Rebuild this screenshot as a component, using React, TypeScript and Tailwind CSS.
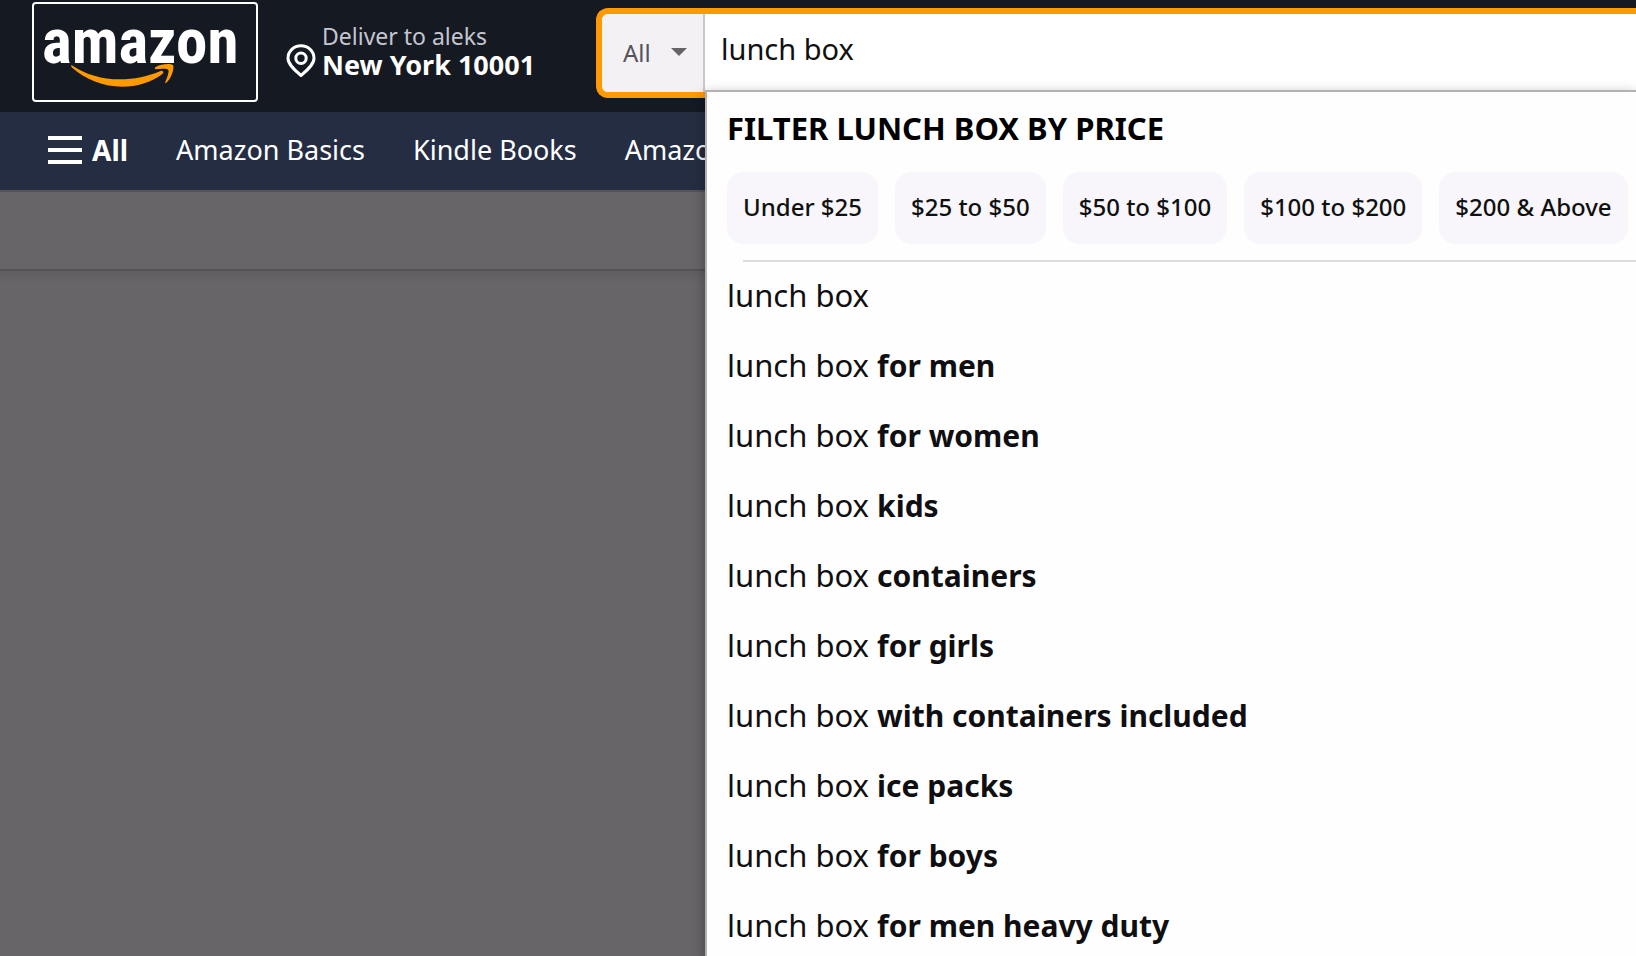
import React from 'react';

const priceFilters = ['Under $25', '$25 to $50', '$50 to $100', '$100 to $200', '$200 & Above'];

const suggestions = [
  '',
  'for men',
  'for women',
  'kids',
  'containers',
  'for girls',
  'with containers included',
  'ice packs',
  'for boys',
  'for men heavy duty',
];

const Logo: React.FC = () => (
  <a
    href="#"
    aria-label="amazon"
    className="relative h-[100px] w-[226px] shrink-0 rounded border-2 border-white text-white"
  >
    <span className="block pl-2 pt-1 font-['Liberation_Sans_Narrow','Roboto_Condensed','Liberation_Sans',sans-serif] text-[63px] leading-[68px] font-bold">
      amazon
    </span>
    {/* Smile with arrow head */}
    <svg viewBox="0 0 104 24" className="absolute left-[37px] top-[60px] h-6 w-[104px]" fill="#ff9900">
      <path d="M1.2 1.4C15 10.5 31 15.300 49 15.300c14 0 28-3 40.500-8.400 2.200-.9 4 1.400 1.900 3C80.500 18.300 65.500 22.700 51.500 22.700 32.500 22.700 14 15.500.9 3.500-.3 2.300-.2.7 1.200 1.400Z" />
      <path d="M84.300 3.300C89 .2 96.500-.4 100.700.4c1.500.3 1.800.9 1.700 2.900-.2 5.500-2.900 11.700-6.800 15.300-.8.700-1.700.3-1.300-.6 1.400-3.500 4.300-10.500 2.900-12.300-1.400-1.700-8.700-.9-12.100-.5-1.200.1-1.700-1.300-.8-1.900Z" />
    </svg>
  </a>
);

const DeliverTo: React.FC = () => (
  <a href="#" className="flex w-[338px] shrink-0 items-start pl-7 pt-5 text-white">
    <svg viewBox="0 0 30 34" className="mt-[22px] h-[34px] w-[30px] shrink-0" fill="none" stroke="currentColor" strokeWidth="3">
      <path d="M15 31.500C9 26.500 2 20.500 2 14.300 2 7.200 7.800 1.800 15 1.800s13 5.400 13 12.500c0 6.200-7 12.200-13 17.200Z" strokeLinejoin="round" />
      <circle cx="15" cy="14.300" r="5.200" />
    </svg>
    <span className="pl-1.5 whitespace-nowrap">
      <span className="block text-[23px] leading-7 text-[#c4c6cf]">Deliver to aleks</span>
      <span className="block text-[27px] leading-[30px] font-bold">New York 10001</span>
    </span>
  </a>
);

const Suggestions: React.FC = () => (
  <div className="absolute top-[76px] right-0 left-[103px] z-10 border-t-2 border-l-2 border-[#b3b1b4] bg-[#fefefe] shadow-[0_4px_12px_rgba(0,0,0,0.35)]">
    <h2 className="pt-3.5 pl-5 text-[31px] leading-11 font-bold text-black">FILTER LUNCH BOX BY PRICE</h2>
    <div className="flex gap-[17px] pt-[22px] pl-5">
      {priceFilters.map((label) => (
        <button
          key={label}
          type="button"
          className="h-[72px] shrink-0 rounded-2xl bg-[#f8f6fa] px-4 pb-0.5 text-2xl font-medium whitespace-nowrap text-[#0f1111]"
        >
          {label}
        </button>
      ))}
    </div>
    <div className="mt-4 ml-9 border-t-2 border-[#dddcde]" />
    <ul>
      {suggestions.map((text) => (
        <li key={text}>
          <a href="#" className="flex h-[70px] items-baseline pt-3 pl-5 text-[31px] leading-[42px] whitespace-pre text-[#0f0f12]">
            {'lunch box '}
            {text && <b className="text-[30px] font-bold">{text}</b>}
          </a>
        </li>
      ))}
    </ul>
  </div>
);

const SearchBar: React.FC = () => (
  <form className="relative mt-1.5 flex h-[90px] min-w-0 flex-1 rounded-l-xl border-y-6 border-l-6 border-[#ff9900] bg-white">
    <div className="relative w-[103px] shrink-0 rounded-l-md border-r-2 border-[#c8c7ca] bg-[#f3f1f4]">
      <select aria-label="Search in" className="h-full w-full appearance-none pl-[21px] text-2xl text-[#555358] outline-none">
        <option>All</option>
      </select>
      <svg viewBox="0 0 16 8" className="pointer-events-none absolute top-[34px] right-4 h-2 w-4" fill="#666468">
        <path d="M0 0h16L8 8Z" />
      </svg>
    </div>
    <input
      type="text"
      aria-label="Search Amazon"
      defaultValue="lunch box"
      className="h-[68px] min-w-0 flex-1 pl-4 text-[29px] text-[#0f1111] outline-none"
    />
    <Suggestions />
  </form>
);

const NavBar: React.FC = () => (
  <nav className="flex h-[78px] shrink-0 items-center gap-12 bg-[#242d42] pb-0.5 pl-12 text-[27px] whitespace-nowrap text-white">
    <button type="button" className="flex items-center gap-2.5 text-[28px] font-bold">
      <span className="flex w-[34px] flex-col gap-2">
        <span className="h-1 bg-white" />
        <span className="h-1 bg-white" />
        <span className="h-1 bg-white" />
      </span>
      All
    </button>
    <a href="#">Amazon Basics</a>
    <a href="#">Kindle Books</a>
    <a href="#">Amazon</a>
  </nav>
);

const App: React.FC = () => {
  return (
    <div className="flex h-screen flex-col overflow-hidden bg-[#676568] font-['Noto_Sans','Open_Sans',sans-serif]">
      <header className="flex h-28 shrink-0 items-start bg-[#151922] pt-0.5 pl-8">
        <Logo />
        <DeliverTo />
        <SearchBar />
      </header>
      <NavBar />
      <main className="flex-1">
        <div className="h-[81px] border-y-2 border-[#555356]" />
        <div className="h-3 bg-linear-to-b from-[#605e61] to-[#676568]" />
      </main>
    </div>
  );
};

export default App;
